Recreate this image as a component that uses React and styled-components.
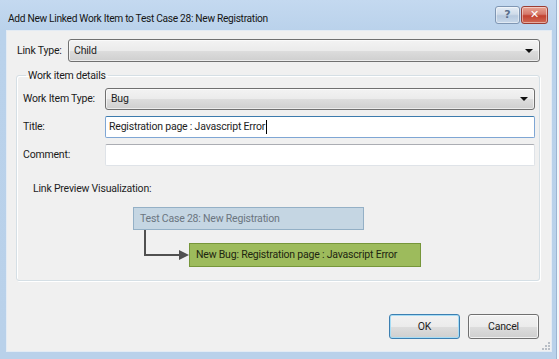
import React from 'react';
import styled, { createGlobalStyle } from 'styled-components';

const Global = createGlobalStyle`
  html, body { margin: 0; padding: 0; background: #f4f7fb; }
  * { box-sizing: border-box; }
  body {
    font-family: Roboto, "Liberation Sans", sans-serif;
    font-size: 10.5px;
    line-height: 14px;
    letter-spacing: -0.2px;
    color: #1e1e1e;
    white-space: nowrap;
  }
`;

const Window = styled.div`
  width: 557px;
  height: 359px;
  display: flex;
  flex-direction: column;
  padding: 0 4px 7px 6px;
  background: linear-gradient(#c4d9f0, #bad2eb 30px, #b9d1ea);
  border-right: 1px solid #9bb5d2;
`;

const TitleBar = styled.div`
  height: 30px;
  display: flex;
  align-items: flex-start;
  justify-content: space-between;
`;

const Caption = styled.div`
  padding: 12px 0 0 2px;
  font-size: 10.2px;
  letter-spacing: -0.3px;
  color: #151515;
`;

const CaptionButtons = styled.div`
  display: flex;
  gap: 1px;
  margin: 6px 4px 0 0;
`;

const CapButton = styled.div`
  width: ${p => p.$w}px;
  height: 18px;
  border: 1px solid ${p => (p.$close ? '#9b3d33' : '#7f96b3')};
  border-radius: 3px;
  display: flex;
  align-items: center;
  justify-content: center;
  background: ${p => (p.$close
    ? 'linear-gradient(#e8a493, #d5786a 45%, #c2412f 55%, #d06a55)'
    : 'linear-gradient(#e4ecf5, #cfdbe9 45%, #b7c9de 55%, #c8d8ea)')};
  color: ${p => (p.$close ? '#fff' : '#5a6f8c')};
  font-family: "DejaVu Sans", sans-serif;
  font-weight: bold;
  font-size: 11px;
  letter-spacing: 0;
  box-shadow: inset 0 0 0 1px rgba(255,255,255,0.45);
`;

const Content = styled.div`
  flex: 1;
  background: #f0f0f0;
  border: 1px solid #e3ebf4;
  display: flex;
  flex-direction: column;
  position: relative;
`;

const TopRow = styled.div`
  display: flex;
  align-items: center;
  margin: 8px 11px 0 10px;
`;

const Label = styled.div`
  width: ${p => p.$w}px;
  flex: none;
  color: #1a1a1a;
`;

const Combo = styled.div`
  flex: 1;
  height: ${p => p.$h}px;
  border: 1px solid #707070;
  border-radius: 3px;
  background: linear-gradient(#f3f3f3, #ebebeb 50%, #dddddd 51%, #cfcfcf);
  box-shadow: inset 0 0 0 1px rgba(255,255,255,0.6);
  display: flex;
  align-items: center;
  justify-content: space-between;
  padding: 0 6px 0 5px;
`;

const Arrow = styled.span`
  width: 0;
  height: 0;
  border-left: 4px solid transparent;
  border-right: 4px solid transparent;
  border-top: 4px solid #111;
`;

const Group = styled.fieldset`
  margin: 7px 11px 0 9px;
  padding: 0 4px 13px 6px;
  border: 1px solid #d5dfe5;
  border-radius: 3px;
  box-shadow: inset 1px 1px 0 #fff, 1px 1px 0 #fff;
  min-width: 0;
`;

const Legend = styled.legend`
  margin-left: 3px;
  padding: 0 2px;
  color: #1a1a1a;
  line-height: 13px;
`;

const FieldRows = styled.div`
  display: flex;
  flex-direction: column;
  gap: 6px;
  margin-top: 6px;
`;

const FieldRow = styled.div`
  display: flex;
  align-items: center;
`;

const TextBox = styled.div`
  flex: 1;
  height: 22px;
  background: #fff;
  border: 1px solid ${p => (p.$focus ? '#7fa6d4' : '#dfe3e8')};
  border-top-color: ${p => (p.$focus ? '#3d7bad' : '#abadb3')};
  border-radius: 2px;
  display: flex;
  align-items: center;
  padding: 0 3px;
`;

const Caret = styled.span`
  display: inline-block;
  width: 1px;
  height: 14px;
  background: #000;
  margin-left: 1px;
`;

const PreviewLabel = styled.div`
  margin: 16px 0 0 10px;
`;

const Diagram = styled.div`
  display: flex;
  flex-direction: column;
  margin: 11px 0 0 110px;
`;

const NodeBox = styled.div`
  height: ${p => p.$h}px;
  width: ${p => p.$w}px;
  margin-top: ${p => p.$top || 0}px;
  border: 1px solid ${p => p.$border};
  background: ${p => p.$bg};
  color: ${p => p.$color};
  display: flex;
  align-items: center;
  padding-left: 6px;
  flex: none;
`;

const LinkRow = styled.div`
  display: flex;
  align-items: flex-start;
`;

const Connector = styled.svg`
  flex: none;
  display: block;
`;

const ButtonBar = styled.div`
  margin-top: auto;
  display: flex;
  justify-content: flex-end;
  gap: 8px;
  padding: 0 12px 12px 0;
`;

const Button = styled.div`
  width: 71px;
  height: 25px;
  border-radius: 3px;
  border: 1px solid ${p => (p.$default ? '#3c7fb1' : '#707070')};
  background: linear-gradient(#f2f2f2, #ebebeb 50%, #dddddd 51%, #cfcfcf);
  box-shadow: inset 0 0 0 1px ${p => (p.$default ? '#a6dcf5' : 'rgba(255,255,255,0.7)')};
  display: flex;
  align-items: center;
  justify-content: center;
`;

const Grip = styled.svg`
  position: absolute;
  right: 1px;
  bottom: 1px;
`;

export default function App() {
  return (
    <>
      <Global />
      <Window>
        <TitleBar>
          <Caption>Add New Linked Work Item to Test Case 28: New Registration</Caption>
          <CaptionButtons>
            <CapButton $w={25}>?</CapButton>
            <CapButton $w={27} $close>✕</CapButton>
          </CaptionButtons>
        </TitleBar>
        <Content>
          <TopRow>
            <Label $w={51}>Link Type:</Label>
            <Combo $h={23}>Child<Arrow /></Combo>
          </TopRow>
          <Group>
            <Legend>Work item details</Legend>
            <FieldRows>
              <FieldRow>
                <Label $w={82}>Work Item Type:</Label>
                <Combo $h={22}>Bug<Arrow /></Combo>
              </FieldRow>
              <FieldRow>
                <Label $w={82}>Title:</Label>
                <TextBox $focus>Registration page : Javascript Error<Caret /></TextBox>
              </FieldRow>
              <FieldRow>
                <Label $w={82}>Comment:</Label>
                <TextBox />
              </FieldRow>
            </FieldRows>
            <PreviewLabel>Link Preview Visualization:</PreviewLabel>
            <Diagram>
              <NodeBox $w={231} $h={23} $bg="#c5d6e3" $border="#94b0c6" $color="#6b7580">
                Test Case 28: New Registration
              </NodeBox>
              <LinkRow>
                <Connector width="56" height="37" viewBox="0 0 56 37">
                  <path d="M12 0 V25 H46" fill="none" stroke="#505050" strokeWidth="2" />
                  <path d="M46 20 L56 25 L46 30 Z" fill="#505050" />
                </Connector>
                <NodeBox $w={232} $h={24} $top={13} $bg="#9dbb5c" $border="#76963a" $color="#1d2610">
                  New Bug: Registration page : Javascript Error
                </NodeBox>
              </LinkRow>
            </Diagram>
          </Group>
          <ButtonBar>
            <Button $default>OK</Button>
            <Button>Cancel</Button>
          </ButtonBar>
          <Grip width="8" height="8" viewBox="0 0 8 8">
            <rect x="6" y="0" width="2" height="2" fill="#b8bec6" />
            <rect x="3" y="3" width="2" height="2" fill="#b8bec6" />
            <rect x="6" y="3" width="2" height="2" fill="#b8bec6" />
            <rect x="0" y="6" width="2" height="2" fill="#b8bec6" />
            <rect x="3" y="6" width="2" height="2" fill="#b8bec6" />
            <rect x="6" y="6" width="2" height="2" fill="#b8bec6" />
          </Grip>
        </Content>
      </Window>
    </>
  );
}
